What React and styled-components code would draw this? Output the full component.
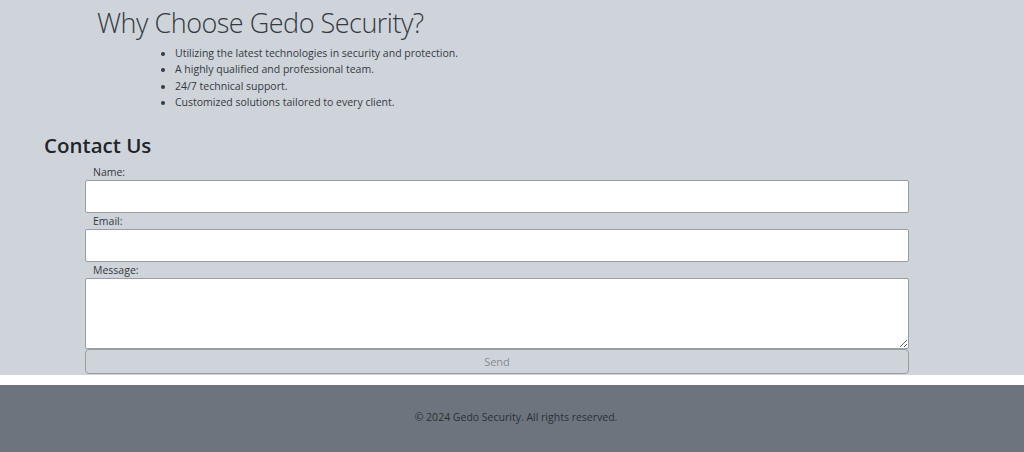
import React from 'react';
import styled, { createGlobalStyle } from 'styled-components';

const GlobalStyle = createGlobalStyle`
  html, body {
    margin: 0;
    padding: 0;
    background: #ffffff;
    font-family: "Open Sans", "Noto Sans", sans-serif;
    color: #212529;
  }
  * { box-sizing: border-box; }
`;

const Main = styled.main`
  background: #cfd4db;
  padding: 6px 115px 0 44px;
  height: 375px;
`;

const About = styled.section`
  padding-left: 53px;
`;

const Title = styled.h2`
  margin: 0;
  font-size: 27px;
  font-weight: 300;
  letter-spacing: -0.5px;
  line-height: 33px;
  color: #343a40;
`;

const List = styled.ul`
  margin: 6px 0 0;
  padding-left: 78px;
  font-size: 10.5px;
  line-height: 16.3px;
  color: #343a40;
`;

const Contact = styled.section`
  margin-top: 22px;
`;

const ContactTitle = styled.h3`
  margin: 0;
  font-size: 20.5px;
  font-weight: 600;
  line-height: 26px;
  color: #212529;
`;

const Form = styled.form`
  margin-left: 41px;
  margin-top: 6px;
  display: flex;
  flex-direction: column;
`;

const Label = styled.label`
  padding-left: 8px;
  font-size: 10.5px;
  line-height: 16px;
  color: #343a40;
`;

const Input = styled.input`
  height: 33px;
  border: 1px solid #9a9ea3;
  border-radius: 2px;
  background: #ffffff;
  font: inherit;
`;

const TextArea = styled.textarea`
  height: 71px;
  border: 1px solid #9a9ea3;
  border-radius: 2px;
  background: #ffffff;
  font: inherit;
  resize: vertical;
  display: block;
`;

const Button = styled.button`
  height: 25px;
  border: 1px solid #9a9ea3;
  border-radius: 4px;
  background: #cfd4db;
  color: #868b90;
  font-family: inherit;
  font-size: 11px;
`;

const Footer = styled.footer`
  margin-top: 10px;
  height: 67px;
  background: #6c757d;
  display: flex;
  align-items: center;
  justify-content: center;
  padding: 0 0 4px 8px;
  font-size: 10.5px;
  color: #2b3035;
`;

export default function App() {
  return (
    <>
      <GlobalStyle />
      <Main>
        <About>
          <Title>Why Choose Gedo Security?</Title>
          <List>
            <li>Utilizing the latest technologies in security and protection.</li>
            <li>A highly qualified and professional team.</li>
            <li>24/7 technical support.</li>
            <li>Customized solutions tailored to every client.</li>
          </List>
        </About>
        <Contact>
          <ContactTitle>Contact Us</ContactTitle>
          <Form onSubmit={e => e.preventDefault()}>
            <Label htmlFor="name">Name:</Label>
            <Input id="name" type="text" />
            <Label htmlFor="email">Email:</Label>
            <Input id="email" type="email" />
            <Label htmlFor="message">Message:</Label>
            <TextArea id="message" />
            <Button type="submit">Send</Button>
          </Form>
        </Contact>
      </Main>
      <Footer>© 2024 Gedo Security. All rights reserved.</Footer>
    </>
  );
}
